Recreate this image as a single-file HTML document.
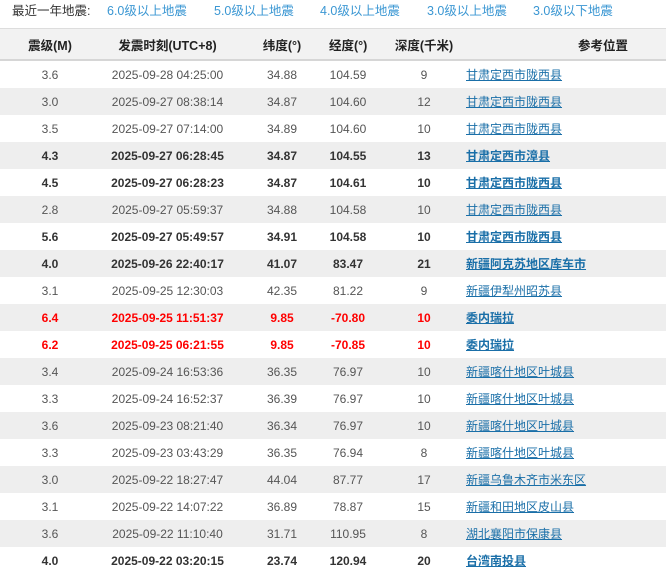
<!DOCTYPE html>
<html><head><meta charset="utf-8"><style>
body{margin:0;width:666px;height:569px;overflow:hidden;background:#fff;font-family:"Liberation Sans","Noto Sans CJK SC",sans-serif;font-size:12px;color:#555}
.top{position:relative;height:28px;line-height:22px;color:#333;font-size:12.5px}
.top a{position:absolute;top:0;color:#3b97d3;text-decoration:none}
.top span{position:absolute;left:12px;top:0}
table{border-collapse:collapse;width:666px;table-layout:fixed}
th{height:30px;background:#f2f2f2;border-top:1px solid #ddd;border-bottom:2px solid #d6d6d6;color:#222;font-weight:bold;font-size:12.5px;padding:0;white-space:nowrap;overflow:visible}
td{height:27px;padding:0;text-align:center;white-space:nowrap}
tr:nth-child(odd) td{background:#fff}
tr:nth-child(even) td{background:#eee}
td.l{text-align:left;padding-left:6px}
td.l a{color:#1a6fa8;text-decoration:underline}
tr.b td{font-weight:bold;color:#333}
tr.r td{font-weight:bold;color:#f00}
tr.b a,tr.r a{font-weight:bold}
td:nth-child(5),th:nth-child(5){padding-left:21px}
</style></head><body>
<div class="top"><span>最近一年地震:</span><a style="left:107px">6.0级以上地震</a><a style="left:214px">5.0级以上地震</a><a style="left:320px">4.0级以上地震</a><a style="left:427px">3.0级以上地震</a><a style="left:533px">3.0级以下地震</a></div>
<table>
<colgroup><col style="width:100px"><col style="width:135px"><col style="width:94px"><col style="width:38px"><col style="width:93px"><col></colgroup>
<thead><tr><th>震级(M)</th><th>发震时刻(UTC+8)</th><th>纬度(°)</th><th>经度(°)</th><th>深度(千米)</th><th style="padding-left:80px">参考位置</th></tr></thead>
<tbody>
<tr><td>3.6</td><td>2025-09-28 04:25:00</td><td>34.88</td><td>104.59</td><td>9</td><td class="l"><a>甘肃定西市陇西县</a></td></tr>
<tr><td>3.0</td><td>2025-09-27 08:38:14</td><td>34.87</td><td>104.60</td><td>12</td><td class="l"><a>甘肃定西市陇西县</a></td></tr>
<tr><td>3.5</td><td>2025-09-27 07:14:00</td><td>34.89</td><td>104.60</td><td>10</td><td class="l"><a>甘肃定西市陇西县</a></td></tr>
<tr class="b"><td>4.3</td><td>2025-09-27 06:28:45</td><td>34.87</td><td>104.55</td><td>13</td><td class="l"><a>甘肃定西市漳县</a></td></tr>
<tr class="b"><td>4.5</td><td>2025-09-27 06:28:23</td><td>34.87</td><td>104.61</td><td>10</td><td class="l"><a>甘肃定西市陇西县</a></td></tr>
<tr><td>2.8</td><td>2025-09-27 05:59:37</td><td>34.88</td><td>104.58</td><td>10</td><td class="l"><a>甘肃定西市陇西县</a></td></tr>
<tr class="b"><td>5.6</td><td>2025-09-27 05:49:57</td><td>34.91</td><td>104.58</td><td>10</td><td class="l"><a>甘肃定西市陇西县</a></td></tr>
<tr class="b"><td>4.0</td><td>2025-09-26 22:40:17</td><td>41.07</td><td>83.47</td><td>21</td><td class="l"><a>新疆阿克苏地区库车市</a></td></tr>
<tr><td>3.1</td><td>2025-09-25 12:30:03</td><td>42.35</td><td>81.22</td><td>9</td><td class="l"><a>新疆伊犁州昭苏县</a></td></tr>
<tr class="r"><td>6.4</td><td>2025-09-25 11:51:37</td><td>9.85</td><td>-70.80</td><td>10</td><td class="l"><a>委内瑞拉</a></td></tr>
<tr class="r"><td>6.2</td><td>2025-09-25 06:21:55</td><td>9.85</td><td>-70.85</td><td>10</td><td class="l"><a>委内瑞拉</a></td></tr>
<tr><td>3.4</td><td>2025-09-24 16:53:36</td><td>36.35</td><td>76.97</td><td>10</td><td class="l"><a>新疆喀什地区叶城县</a></td></tr>
<tr><td>3.3</td><td>2025-09-24 16:52:37</td><td>36.39</td><td>76.97</td><td>10</td><td class="l"><a>新疆喀什地区叶城县</a></td></tr>
<tr><td>3.6</td><td>2025-09-23 08:21:40</td><td>36.34</td><td>76.97</td><td>10</td><td class="l"><a>新疆喀什地区叶城县</a></td></tr>
<tr><td>3.3</td><td>2025-09-23 03:43:29</td><td>36.35</td><td>76.94</td><td>8</td><td class="l"><a>新疆喀什地区叶城县</a></td></tr>
<tr><td>3.0</td><td>2025-09-22 18:27:47</td><td>44.04</td><td>87.77</td><td>17</td><td class="l"><a>新疆乌鲁木齐市米东区</a></td></tr>
<tr><td>3.1</td><td>2025-09-22 14:07:22</td><td>36.89</td><td>78.87</td><td>15</td><td class="l"><a>新疆和田地区皮山县</a></td></tr>
<tr><td>3.6</td><td>2025-09-22 11:10:40</td><td>31.71</td><td>110.95</td><td>8</td><td class="l"><a>湖北襄阳市保康县</a></td></tr>
<tr class="b"><td>4.0</td><td>2025-09-22 03:20:15</td><td>23.74</td><td>120.94</td><td>20</td><td class="l"><a>台湾南投县</a></td></tr>
</tbody></table>
</body></html>
